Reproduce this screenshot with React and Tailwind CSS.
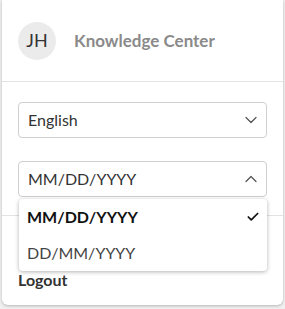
import { ChevronDown, ChevronUp, Check } from 'lucide-react';

const App = () => {
  return (
    <div className="w-[285px] h-[309px] bg-[#f0f0f0] relative overflow-hidden" style={{ fontFamily: 'Lato, "Open Sans", sans-serif' }}>
      <div className="ml-[2px] w-[281px] h-[305px] bg-white rounded-b-md shadow-[0_1px_3px_rgba(0,0,0,0.25)] flex flex-col">
        <div className="h-[82px] flex items-center gap-[18px] px-4 border-b border-[#e3e3e3]">
          <div className="w-[38px] h-[38px] rounded-full bg-[#ebebeb] flex items-center justify-center text-[18px] text-[#333]">
            JH
          </div>
          <span className="text-[17px] font-bold text-[#8a8a8a]">Knowledge Center</span>
        </div>

        <div className="px-4 pt-5 pb-[18px] flex flex-col gap-[23px] border-b border-[#e3e3e3]">
          <div className="h-9 border border-[#cfcfcf] rounded flex items-center justify-between pl-[9px] pr-[5px]">
            <span className="text-[16px] text-[#333]">English</span>
            <ChevronDown size={20} strokeWidth={1.5} className="text-[#555]" />
          </div>
          <div className="relative">
            <div className="h-9 border border-[#cfcfcf] rounded flex items-center justify-between pl-[9px] pr-[5px]">
              <span className="text-[16px] text-[#333]">MM/DD/YYYY</span>
              <ChevronUp size={20} strokeWidth={1.5} className="text-[#555]" />
            </div>
            <div className="absolute left-[1px] right-0 top-[38px] bg-white rounded-sm shadow-[0_1px_4px_rgba(0,0,0,0.3)] z-10">
              <div className="h-9 flex items-center justify-between pl-2 pr-[7px]">
                <span className="text-[16px] font-bold text-[#111]">MM/DD/YYYY</span>
                <Check size={14} strokeWidth={3} className="text-[#111]" />
              </div>
              <div className="h-9 flex items-center pl-2">
                <span className="text-[16px] text-[#444]">DD/MM/YYYY</span>
              </div>
            </div>
          </div>
        </div>

        <div className="px-4 pt-[52px]">
          <span className="text-[16px] font-bold text-[#333]">Logout</span>
        </div>
      </div>
    </div>
  );
};

export default App;
